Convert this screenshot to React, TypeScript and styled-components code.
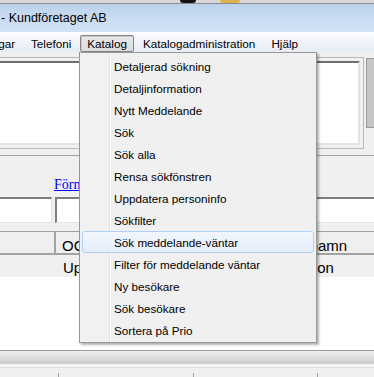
import React from "react";
import styled, { createGlobalStyle } from "styled-components";

const GlobalStyle = createGlobalStyle`
  html, body {
    margin: 0;
    padding: 0;
    background: #f0f0f0;
  }
  body {
    font-family: "Liberation Sans", Arial, sans-serif;
  }
`;

const UI_FONT = `"Liberation Sans", Arial, sans-serif`;

// window chrome
const Screen = styled.div`
  position: relative;
  width: 374px;
  height: 377px;
  overflow: hidden;
  display: flex;
  flex-direction: column;
  background: #f0f0f0;
  font-family: ${UI_FONT};
`;

const TopStrip = styled.div`
  height: 4px;
  flex: none;
  display: flex;
  background: #d9d9d9;
  border-bottom: 1px solid #8c8c8c;
  box-sizing: border-box;
`;

const StripBlock = styled.div<{ $left: number; $width: number; $color: string }>`
  margin-left: ${(p) => p.$left}px;
  width: ${(p) => p.$width}px;
  background: ${(p) => p.$color};
  border-radius: 0 0 3px 3px;
`;

const TitleBar = styled.div`
  height: 28px;
  flex: none;
  display: flex;
  align-items: center;
  padding-left: 1px;
  background: linear-gradient(180deg, #bcd2ec 0%, #c8dbf1 45%, #d2e2f5 100%);
  font-size: 12.5px;
  color: #000;
`;

const MenuBar = styled.div`
  height: 20px;
  flex: none;
  box-sizing: border-box;
  display: flex;
  align-items: flex-start;
  padding-top: 2px;
  border-top: 1px solid #fff;
  background: linear-gradient(180deg, #fbfcfe 0%, #eef2f8 60%, #e6ecf5 100%);
  overflow: hidden;
`;

const MenuBarItem = styled.div<{ $pressed?: boolean; $offset?: number }>`
  height: 17px;
  box-sizing: border-box;
  padding: 0 6px;
  margin: 0 1px;
  margin-left: ${(p) => (p.$offset !== undefined ? `${p.$offset}px` : "1px")};
  line-height: 15px;
  font-size: 11.7px;
  color: #000;
  white-space: nowrap;
  border: 1px solid ${(p) => (p.$pressed ? "#868686" : "transparent")};
  border-radius: 2px;
  background: ${(p) =>
    p.$pressed ? "linear-gradient(180deg, #e9e9e9 0%, #dcdcdc 100%)" : "transparent"};
  box-shadow: ${(p) => (p.$pressed ? "inset 1px 1px 0 #c8c8c8" : "none")};
`;

// top message pane
const TopPanel = styled.div`
  height: 104px;
  flex: none;
  box-sizing: border-box;
  display: flex;
  align-items: flex-start;
  padding-top: 5px;
  border-bottom: 1px solid #a0a0a0;
`;

const MessageFrame = styled.div`
  margin-left: -6px;
  width: 370px;
  height: 92px;
  flex: none;
  box-sizing: border-box;
  padding: 3px;
  border: 1px solid #b9b9b9;
  background: #f0f0f0;
`;

const MessageBox = styled.div`
  height: 100%;
  box-sizing: border-box;
  background: #fff;
  border-top: 2px solid #6d6d6d;
  border-left: 2px solid #6d6d6d;
  border-right: 2px solid #e3e3e3;
  border-bottom: 2px solid #e3e3e3;
`;

const SideBlock = styled.div`
  margin-left: 2px;
  margin-top: 1px;
  width: 12px;
  height: 70px;
  flex: none;
  box-sizing: border-box;
  background: #c6c6c6;
  border: 1px solid #9c9c9c;
`;

// search form
const FormArea = styled.div`
  flex: none;
  display: flex;
  flex-direction: column;
  padding-top: 21px;
`;

const LinkRow = styled.div`
  height: 16px;
  padding-left: 54px;
  font-family: "Liberation Serif", "Times New Roman", serif;
  font-size: 14px;
  line-height: 16px;
`;

const FormLink = styled.a`
  color: #0000ee;
  text-decoration: underline;
`;

const InputRow = styled.div`
  margin-top: 4px;
  margin-left: -20px;
  display: flex;
  gap: 3px;
`;

const TextBox = styled.div<{ $width: number }>`
  width: ${(p) => p.$width}px;
  height: 26px;
  flex: none;
  box-sizing: border-box;
  background: #fff;
  border-top: 2px solid #7e7e7e;
  border-left: 2px solid #7e7e7e;
  border-right: 1px solid #e3e3e3;
  border-bottom: 1px solid #e3e3e3;
`;

const Grid = styled.div`
  margin-top: 8px;
  margin-left: -20px;
  display: flex;
  flex-direction: column;
`;

const GridRow = styled.div<{ $header?: boolean }>`
  display: flex;
  height: ${(p) => (p.$header ? 24 : 22)}px;
  box-sizing: border-box;
  background: #f0f0f0;
  border-top: ${(p) => (p.$header ? "1px solid #a0a0a0" : "none")};
`;

const GridCell = styled.div<{ $width: number; $header?: boolean; $pad: number }>`
  width: ${(p) => p.$width}px;
  flex: none;
  box-sizing: border-box;
  padding-left: ${(p) => p.$pad}px;
  padding-top: ${(p) => (p.$header ? 5 : 4)}px;
  font-size: 15px;
  line-height: 17px;
  color: #000;
  white-space: nowrap;
  overflow: hidden;
  border-right: ${(p) => (p.$header ? "2px solid #a3a3a3" : "none")};
  border-bottom: ${(p) => (p.$header ? "2px solid #a3a3a3" : "none")};
  background: ${(p) => (p.$header ? "#efefef" : "transparent")};
`;

const WhiteArea = styled.div`
  flex: 1;
  background: #fff;
`;

const BottomBand = styled.div`
  flex: none;
  height: 18px;
  box-sizing: border-box;
  border-top: 1px solid #9a9a9a;
  background: linear-gradient(
    180deg,
    #eeeeee 0px,
    #dedede 7px,
    #cdcdcd 12px,
    #d8d8d8 13px,
    #ffffff 14px,
    #ffffff 15px,
    #e2e2e2 16px
  );
`;

const StatusBar = styled.div`
  flex: none;
  height: 9px;
  display: flex;
  align-items: flex-end;
  background: #f0f0f0;
`;

const StatusPane = styled.div<{ $width: number }>`
  width: ${(p) => p.$width}px;
  flex: none;
  height: 4px;
  border-right: 1px solid #a0a0a0;
`;

// dropdown menu (overlay)
const DropMenu = styled.div`
  position: absolute;
  left: 79px;
  top: 52px;
  width: 238px;
  box-sizing: border-box;
  padding: 2px 2px 1px;
  border: 1px solid #979797;
  background: linear-gradient(
    to right,
    #f1f1f1 0 29px,
    #e2e3e3 29px 30px,
    #ffffff 30px 31px,
    #f0f0f0 31px
  );
  box-shadow: 2px 2px 2px rgba(0, 0, 0, 0.3);
  display: flex;
  flex-direction: column;
`;

const DropItem = styled.div<{ $active?: boolean }>`
  height: 22px;
  box-sizing: border-box;
  padding-left: 31px;
  display: flex;
  align-items: center;
  font-size: 11.7px;
  color: #000;
  white-space: nowrap;
  border: 1px solid ${(p) => (p.$active ? "#aed0f2" : "transparent")};
  border-radius: 3px;
  background: ${(p) =>
    p.$active ? "linear-gradient(180deg, #f2f7fd 0%, #e4eefb 100%)" : "transparent"};
`;

const menuItems = [
  "Detaljerad sökning",
  "Detaljinformation",
  "Nytt Meddelande",
  "Sök",
  "Sök alla",
  "Rensa sökfönstren",
  "Uppdatera personinfo",
  "Sökfilter",
  "Sök meddelande-väntar",
  "Filter för meddelande väntar",
  "Ny besökare",
  "Sök besökare",
  "Sortera på Prio",
];

const App = () => {
  return (
    <>
      <GlobalStyle />
      <Screen>
        <TopStrip>
          <StripBlock $left={180} $width={16} $color="#111" />
          <StripBlock $left={24} $width={20} $color="#d9b54a" />
        </TopStrip>
        <TitleBar>- Kundföretaget AB</TitleBar>
        <MenuBar>
          <MenuBarItem $offset={-55}>Inställningar</MenuBarItem>
          <MenuBarItem>Telefoni</MenuBarItem>
          <MenuBarItem $pressed>Katalog</MenuBarItem>
          <MenuBarItem>Katalogadministration</MenuBarItem>
          <MenuBarItem>Hjälp</MenuBarItem>
        </MenuBar>

        <TopPanel>
          <MessageFrame>
            <MessageBox />
          </MessageFrame>
          <SideBlock />
        </TopPanel>

        <FormArea>
          <LinkRow>
            <FormLink href="#">Förmedla</FormLink>
          </LinkRow>
          <InputRow>
            <TextBox $width={72} />
            <TextBox $width={340} />
          </InputRow>
          <Grid>
            <GridRow $header>
              <GridCell $header $width={76} $pad={0} />
              <GridCell $header $width={214} $pad={6}>
                OCR
              </GridCell>
              <GridCell $header $width={130} $pad={8}>
                Efternamn
              </GridCell>
            </GridRow>
            <GridRow>
              <GridCell $width={76} $pad={0} />
              <GridCell $width={214} $pad={7}>
                Uppdaterad
              </GridCell>
              <GridCell $width={130} $pad={8}>
                Jansson
              </GridCell>
            </GridRow>
          </Grid>
        </FormArea>

        <WhiteArea />
        <BottomBand />
        <StatusBar>
          <StatusPane $width={58} />
          <StatusPane $width={134} />
          <StatusPane $width={123} />
        </StatusBar>

        <DropMenu>
          {menuItems.map((item, index) => (
            <DropItem key={index} $active={index === 8}>
              {item}
            </DropItem>
          ))}
        </DropMenu>
      </Screen>
    </>
  );
};

export default App;
